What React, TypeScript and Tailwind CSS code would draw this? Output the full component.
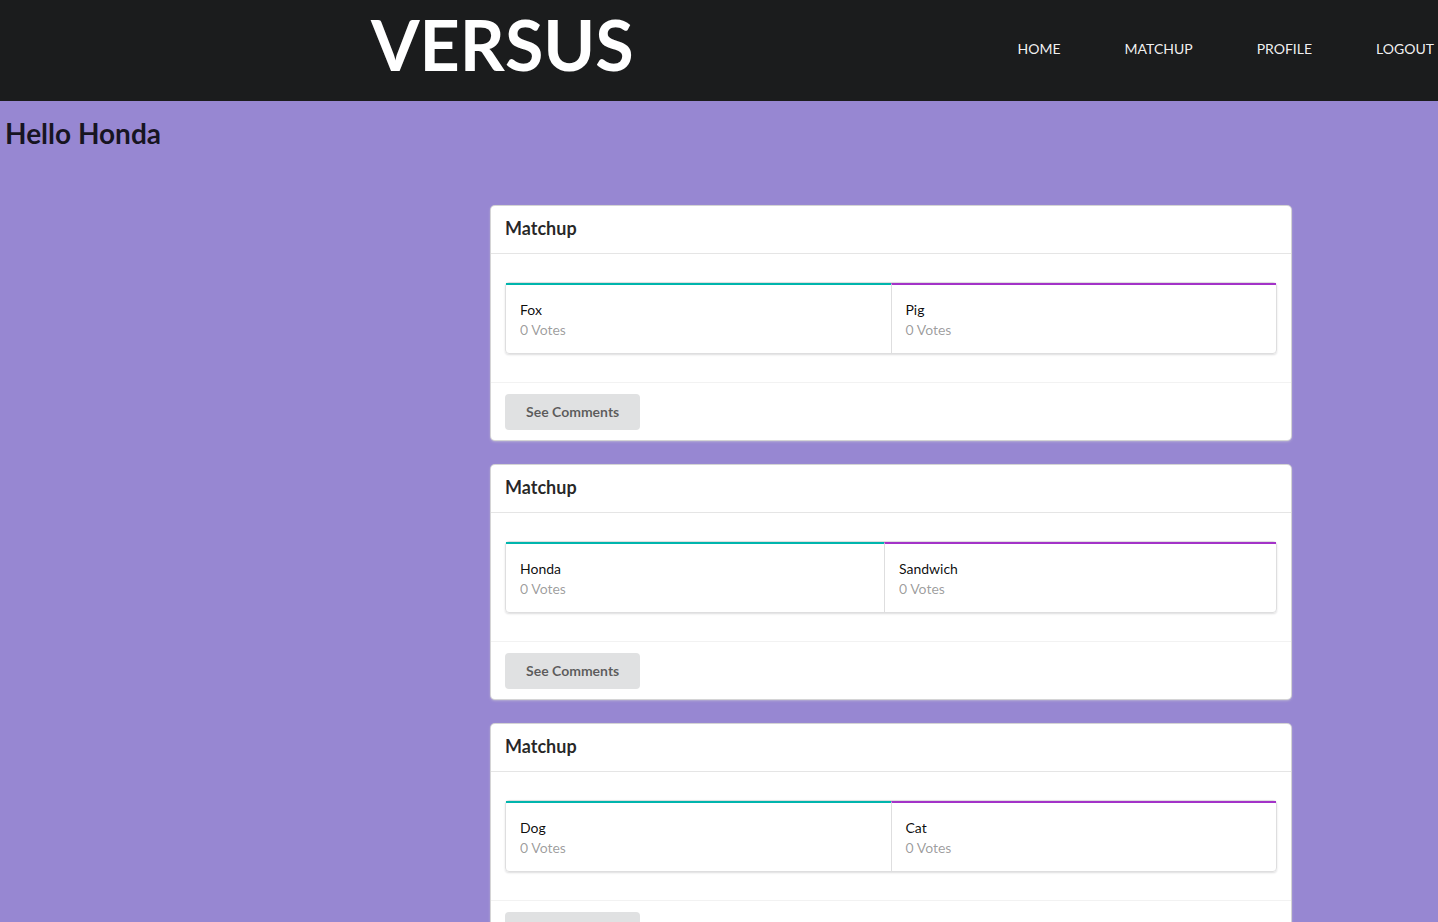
const links = ["Home", "Matchup", "Profile", "Logout"];

type Side = { name: string; votes: number };

const matchups: [Side, Side][] = [
  [{ name: "Fox", votes: 0 }, { name: "Pig", votes: 0 }],
  [{ name: "Honda", votes: 0 }, { name: "Sandwich", votes: 0 }],
  [{ name: "Dog", votes: 0 }, { name: "Cat", votes: 0 }],
];

function Choice({ side, accent }: { side: Side; accent: string }) {
  return (
    <div className={`flex-auto border-t-2 px-[14px] pt-[15px] pb-[13px] leading-5 ${accent}`}>
      <p className="text-black/95">{side.name}</p>
      <p className="text-black/40">{side.votes} Votes</p>
    </div>
  );
}

function MatchupCard({ sides }: { sides: [Side, Side] }) {
  return (
    <article className="rounded bg-white shadow-[0_1px_3px_0_#d4d4d5,0_0_0_1px_#d4d4d5]">
      <h2 className="px-[14px] pt-[10px] pb-[13px] text-lg leading-6 font-bold text-black/85">
        Matchup
      </h2>
      <div className="border-t border-black/10 px-[14px] py-7">
        <div className="flex rounded border border-[#dededf] shadow-[0_1px_2px_0_rgba(34,36,38,0.15)]">
          <Choice side={sides[0]} accent="border-t-[#00b5ad]" />
          <Choice side={sides[1]} accent="border-l border-l-[#dededf] border-t-[#a333c8]" />
        </div>
      </div>
      <div className="border-t border-black/5 px-[14px] pt-[11px] pb-[10px]">
        <button
          type="button"
          className="block h-9 rounded bg-[#e0e1e2] px-[21px] font-bold text-black/60 hover:bg-[#cacbcd]"
        >
          See Comments
        </button>
      </div>
    </article>
  );
}

export default function App() {
  return (
    <div className="min-h-screen bg-[#9787d2] font-[Lato,sans-serif] text-sm">
      <header className="flex h-[101px] justify-between bg-[#1b1c1d] pr-1 pl-[371px] text-white">
        <div className="text-[70px] leading-[88px] font-bold">VERSUS</div>
        <nav className="flex gap-16 pt-[39px] leading-5 uppercase">
          {links.map((link) => (
            <a key={link} href="#" className="h-5 text-white/95 hover:text-white">
              {link}
            </a>
          ))}
        </nav>
      </header>
      <main>
        <h1 className="px-[5px] pt-[14px] text-[28px] leading-9 font-bold text-black/85">
          Hello Honda
        </h1>
        <section className="mt-[55px] ml-[491px] flex max-w-[800px] flex-col gap-[25px]">
          {matchups.map((sides) => (
            <MatchupCard key={sides[0].name} sides={sides} />
          ))}
        </section>
      </main>
    </div>
  );
}
